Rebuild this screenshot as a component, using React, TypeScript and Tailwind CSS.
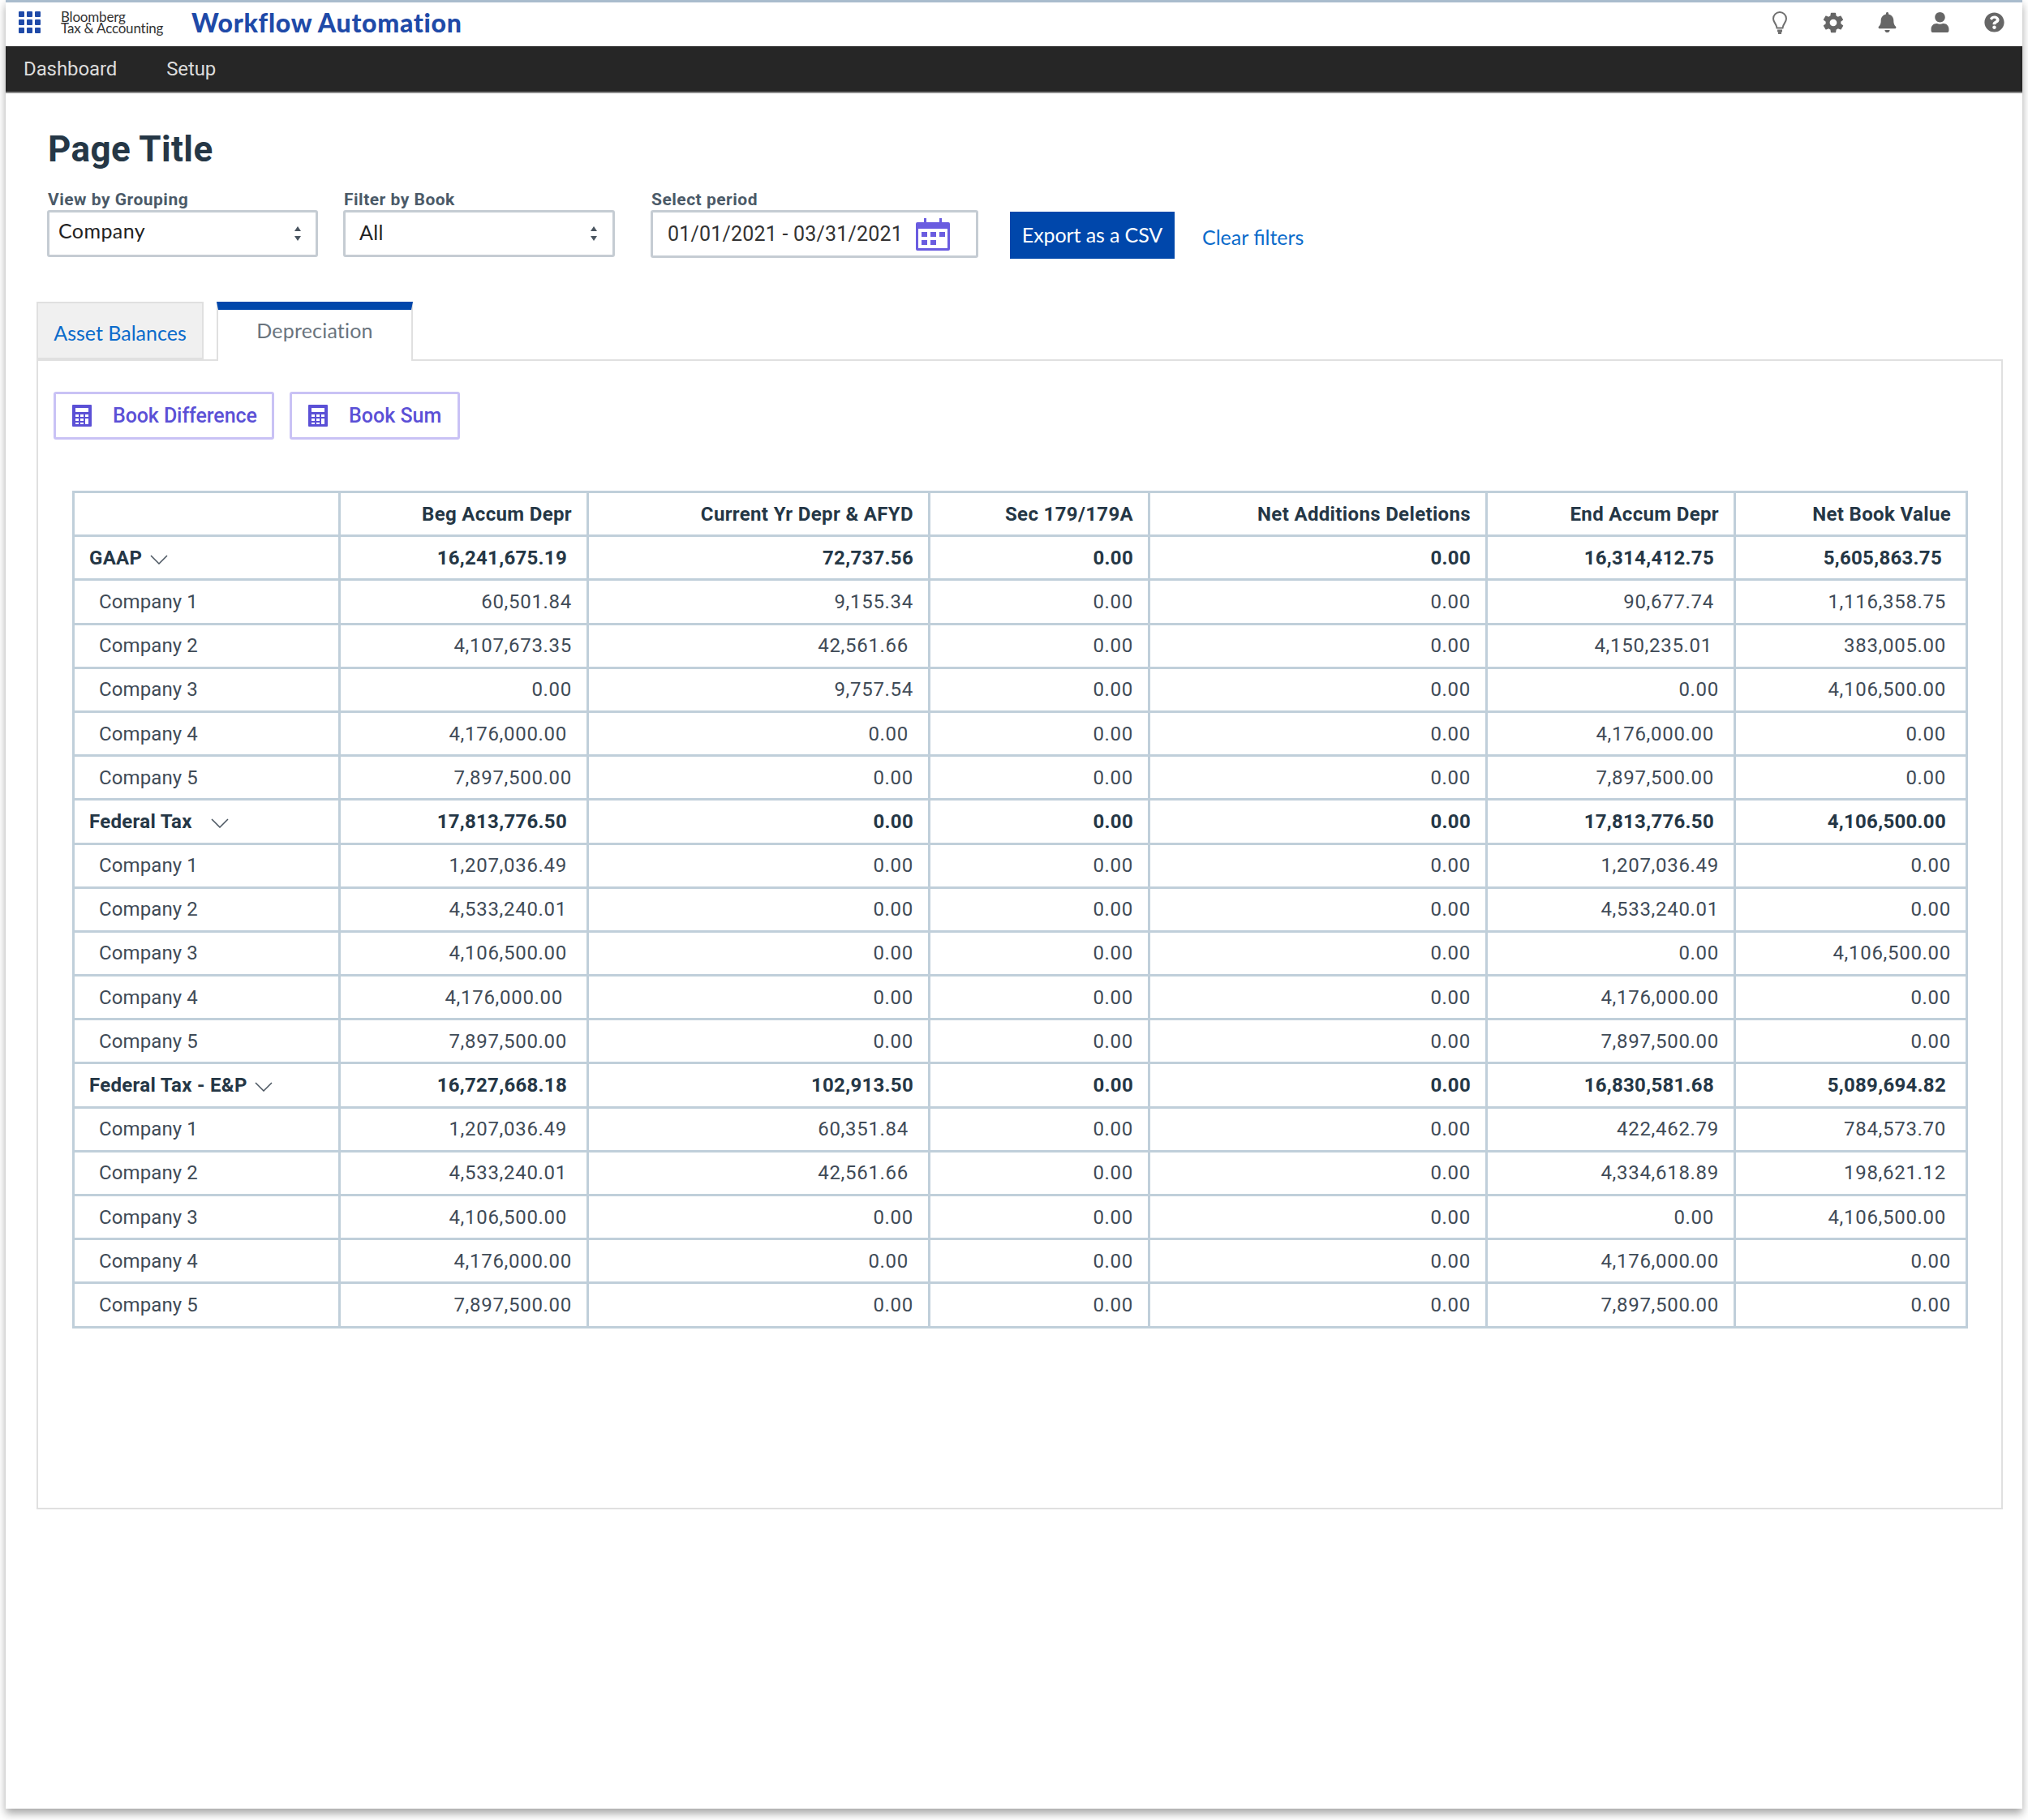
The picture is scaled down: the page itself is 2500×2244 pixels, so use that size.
import { FaBell, FaQuestionCircle, FaUser } from 'react-icons/fa';
import { IoMdSettings } from 'react-icons/io';

type Row = { name: string; group?: boolean; cells: string[] };

// a cell may end in "|n": n extra pixels of right padding, the source table is not quite aligned
const rows: Row[] = [
  { name: 'GAAP', group: true, cells: ['16,241,675.19|6', '72,737.56', '0.00', '0.00', '16,314,412.75|6', '5,605,863.75|11'] },
  { name: 'Company 1', cells: ['60,501.84', '9,155.34', '0.00', '0.00', '90,677.74|6', '1,116,358.75|6'] },
  { name: 'Company 2', cells: ['4,107,673.35', '42,561.66|6', '0.00', '0.00', '4,150,235.01|8', '383,005.00|6'] },
  { name: 'Company 3', cells: ['0.00', '9,757.54', '0.00', '0.00', '0.00', '4,106,500.00|6'] },
  { name: 'Company 4', cells: ['4,176,000.00|6', '0.00|6', '0.00', '0.00', '4,176,000.00|6', '0.00|6'] },
  { name: 'Company 5', cells: ['7,897,500.00', '0.00', '0.00', '0.00', '7,897,500.00|6', '0.00|6'] },
  { name: 'Federal Tax', group: true, cells: ['17,813,776.50|6', '0.00', '0.00', '0.00', '17,813,776.50|6', '4,106,500.00|6'] },
  { name: 'Company 1', cells: ['1,207,036.49|6', '0.00', '0.00', '0.00', '1,207,036.49', '0.00'] },
  { name: 'Company 2', cells: ['4,533,240.01|6', '0.00', '0.00', '0.00', '4,533,240.01', '0.00'] },
  { name: 'Company 3', cells: ['4,106,500.00|6', '0.00', '0.00', '0.00', '0.00', '4,106,500.00'] },
  { name: 'Company 4', cells: ['4,176,000.00|11', '0.00', '0.00', '0.00', '4,176,000.00', '0.00'] },
  { name: 'Company 5', cells: ['7,897,500.00|6', '0.00', '0.00', '0.00', '7,897,500.00', '0.00'] },
  { name: 'Federal Tax - E&P', group: true, cells: ['16,727,668.18|6', '102,913.50', '0.00', '0.00', '16,830,581.68|6', '5,089,694.82|6'] },
  { name: 'Company 1', cells: ['1,207,036.49|6', '60,351.84|6', '0.00', '0.00', '422,462.79', '784,573.70|6'] },
  { name: 'Company 2', cells: ['4,533,240.01|6', '42,561.66|6', '0.00', '0.00', '4,334,618.89', '198,621.12|6'] },
  { name: 'Company 3', cells: ['4,106,500.00|6', '0.00', '0.00', '0.00', '0.00|6', '4,106,500.00|6'] },
  { name: 'Company 4', cells: ['4,176,000.00', '0.00|6', '0.00', '0.00', '4,176,000.00', '0.00'] },
  { name: 'Company 5', cells: ['7,897,500.00', '0.00', '0.00', '0.00', '7,897,500.00', '0.00'] },
];

const headers = ['Beg Accum Depr', 'Current Yr Depr & AFYD', 'Sec 179/179A', 'Net Additions Deletions', 'End Accum Depr', 'Net Book Value'];
const colWidths = [328, 306, 421, 271, 416, 306, 286];

const GridIcon = () => (
  <svg width="27" height="27" viewBox="0 0 27 27" fill="#1f4aa8">
    {[0, 10, 20].map(y =>
      [0, 10, 20].map(x => <rect key={x + '-' + y} x={x} y={y} width="7" height="7" rx="1" />)
    )}
  </svg>
);

const BulbIcon = () => (
  <svg width="18" height="28" viewBox="0 0 18 28" fill="none" stroke="#707070" strokeWidth="2">
    <path d="M5.5 20.5C5 15.5 1 13.5 1 9a8 8 0 0 1 16 0c0 4.5-4 6.500-4.500 11.500z" />
    <path d="M6 24h6M7 27h4" strokeWidth="3" />
  </svg>
);

const Sorter = () => (
  <svg width="10" height="20" viewBox="0 0 10 20" fill="#4a5560">
    <path d="M5 1l4 6H1zM5 19L1 13h8z" />
  </svg>
);

const CalendarIcon = () => (
  <svg width="42" height="40" viewBox="0 0 42 40">
    <path d="M10 0h3v6h-3zM29 0h3v6h-3z" fill="#6a5ce0" />
    <rect y="5" width="42" height="35" rx="2" fill="#6a5ce0" />
    <rect x="3" y="13" width="36" height="24" fill="#fff" />
    <path d="M7 17h7v6H7zM18 17h7v6h-7zM29 17h7v6h-7zM7 27h7v6H7zM18 27h7v6h-7z" fill="#6a5ce0" />
  </svg>
);

const CalcIcon = () => (
  <svg width="24" height="27" viewBox="0 0 24 27">
    <rect width="24" height="27" rx="1" fill="#5b50d6" />
    <path d="M4 4h16v5H4z" fill="#fff" />
    <path d="M4 12h4v3H4zM10 12h4v3h-4zM16 12h4v3h-4zM4 17h4v3H4zM10 17h4v3h-4zM16 17h4v7h-4zM4 22h4v2H4zM10 22h4v2h-4z" fill="#fff" />
  </svg>
);

const Chevron = ({ className }: { className?: string }) => (
  <svg className={className} width="22" height="12" viewBox="0 0 22 12" fill="none" stroke="#4a5560" strokeWidth="1.500">
    <path d="M1 1l10 10L21 1" />
  </svg>
);

const splitCell = (cell: string): [string, number] => {
  const [text, extra] = cell.split('|');
  return [text, extra ? parseInt(extra) : 0];
};

export default function App() {
  return (
    <div className="w-[2500px] h-[2244px] bg-white font-[family-name:Roboto,sans-serif] tracking-[0.7px] text-[#3f4b57]">
      <div className="ml-[7px] w-[2486px] h-[2230px] bg-white shadow-[0_6px_10px_rgba(0,0,0,0.35)]">
        <header className="h-[57px] border-t-[3px] border-[#a9bccd] pb-[5px] flex items-center">
          <div className="ml-[16px]">
            <GridIcon />
          </div>
          <div className="ml-[25px] w-[135px] font-[family-name:Lato,sans-serif] text-[17px] leading-[14px] tracking-[-0.2px] text-[#333]">
            <div>Bloomberg</div>
            <div className="whitespace-nowrap">Tax & Accounting</div>
          </div>
          <div className="ml-[26px] font-[family-name:Lato,sans-serif] font-black text-[32px] tracking-[0.7px] text-[#1f4aa8]">
            Workflow Automation
          </div>
          <div className="ml-auto mr-[22px] flex items-center gap-[42px] text-[#666]">
            <BulbIcon />
            <IoMdSettings size={30} className="-mr-[3px]" />
            <FaBell size={25} className="-mr-[2px]" />
            <FaUser size={25} />
            <FaQuestionCircle size={25} />
          </div>
        </header>

        <nav className="h-[58px] bg-[#262626] border-b-[2px] border-[#8a8a8a] flex items-center pl-[22px] gap-[61px] text-[24px] tracking-[-0.1px] text-[#dcdcdc]">
          <span>Dashboard</span>
          <span>Setup</span>
        </nav>

        <main className="pt-[43px]">
          <h1 className="pl-[52px] h-[52px] text-[44px] leading-[52px] font-bold tracking-[0.4px] text-[#253746]">Page Title</h1>

          <div className="mt-[24px] pl-[51px] flex items-start">
            <div className="w-[334px]">
              <div className="h-[24px] pl-[1px] text-[21px] leading-[24px] font-bold tracking-[0.5px] text-[#4b5a68]">View by Grouping</div>
              <div className="mt-[1px] h-[58px] border-[3px] border-[#c5ccd3] rounded-[3px] flex items-center justify-between pl-[11px] pr-[17px] font-[family-name:Lato,sans-serif] text-[25px] tracking-[0.4px] text-[#222] bg-white">
                <span className="-mt-[7px]">Company</span>
                <Sorter />
              </div>
            </div>
            <div className="w-[335px] ml-[31px]">
              <div className="h-[24px] pl-[1px] text-[21px] leading-[24px] font-bold tracking-[0.5px] text-[#4b5a68]">Filter by Book</div>
              <div className="mt-[1px] h-[58px] border-[3px] border-[#c5ccd3] rounded-[3px] flex items-center justify-between pl-[17px] pr-[18px] font-[family-name:Lato,sans-serif] text-[25px] tracking-[0.4px] text-[#222] bg-white">
                <span className="-mt-[2px]">All</span>
                <Sorter />
              </div>
            </div>
            <div className="w-[404px] ml-[44px]">
              <div className="h-[24px] pl-[1px] text-[21px] leading-[24px] font-bold tracking-[0.5px] text-[#4b5a68]">Select period</div>
              <div className="mt-[1px] h-[59px] border-[3px] border-[#c5ccd3] rounded-[3px] flex items-center pl-[18px] text-[25px] tracking-[0.2px] text-[#333] bg-white">
                <span className="w-[306px] whitespace-nowrap">01/01/2021 - 03/31/2021</span>
                <CalendarIcon />
              </div>
            </div>
            <button className="ml-[39px] mt-[27px] w-[203px] h-[58px] bg-[#0047ab] text-white font-[family-name:Lato,sans-serif] text-[25px] tracking-[-0.1px]">
              Export as a CSV
            </button>
            <a className="ml-[34px] mt-[43px] font-[family-name:Lato,sans-serif] text-[25px] leading-[30px] tracking-[0px] text-[#0b6bcb]">Clear filters</a>
          </div>

          <div className="mt-[53px] ml-[38px] w-[2424px]">
            <div className="flex items-end">
              <div className="w-[206px] h-[71px] bg-[#f0f0f0] border-2 border-[#e0e0e0] flex items-center justify-center pt-[6px] font-[family-name:Lato,sans-serif] text-[25px] tracking-[0px] text-[#0b6bcb]">
                Asset Balances
              </div>
              <div className="relative z-10 -mb-[2px] ml-[16px] w-[242px] h-[73px] bg-white border-x-2 border-[#e0e0e0] border-t-[10px] border-t-[#0047ab] flex items-center justify-center pb-[12px] font-[family-name:Lato,sans-serif] text-[25px] tracking-[0.2px] text-[#6a747e]">
                Depreciation
              </div>
            </div>

            <section className="h-[1418px] border-2 border-[#e0e0e0] pt-[38px] pl-[19px]">
              <div className="flex gap-[19px]">
                <button className="w-[272px] h-[59px] border-[3px] border-[#c9c2f5] rounded-[3px] flex items-center pl-[20px] gap-[26px] text-[25px] font-medium tracking-[-0.1px] text-[#5b50d6]">
                  <CalcIcon />
                  Book Difference
                </button>
                <button className="w-[210px] h-[59px] border-[3px] border-[#c9c2f5] rounded-[3px] flex items-center pl-[20px] gap-[26px] text-[25px] font-medium tracking-[0px] text-[#5b50d6]">
                  <CalcIcon />
                  Book Sum
                </button>
              </div>

              <table className="mt-[63px] ml-[23px] w-[2334px] table-fixed border-collapse text-[24px]">
                <colgroup>
                  {colWidths.map((w, i) => (
                    <col key={i} style={{ width: w }} />
                  ))}
                </colgroup>
                <thead>
                  <tr className="h-[54.2px]">
                    <th className="border-[3px] border-[#c0cfda]"></th>
                    {headers.map(h => (
                      <th key={h} className="border-[3px] border-[#c0cfda] pr-[18px] text-right font-bold tracking-[0.35px] text-[#253746] whitespace-nowrap">
                        {h}
                      </th>
                    ))}
                  </tr>
                </thead>
                <tbody>
                  {rows.map((row, i) => (
                    <tr key={i} className={row.group ? 'h-[54.2px] font-bold tracking-[0.3px] text-[#253746]' : 'h-[54.2px]'}>
                      <td className={row.group ? 'border-[3px] border-[#c0cfda] pl-[18px] whitespace-nowrap' : 'border-[3px] border-[#c0cfda] pl-[30px] tracking-[0.1px] whitespace-nowrap'}>
                        <span className="inline-flex items-center">
                          {row.name}
                          {row.group && (
                            <Chevron className={row.name === 'Federal Tax - E&P' ? 'ml-[9px] mt-[4px]' : row.name === 'GAAP' ? 'ml-[10px] mt-[4px]' : 'ml-[23px] mt-[4px]'} />
                          )}
                        </span>
                      </td>
                      {row.cells.map((cell, j) => {
                        const [text, extra] = splitCell(cell);
                        return (
                          <td key={j} className="border-[3px] border-[#c0cfda] text-right" style={{ paddingRight: 18 + extra }}>
                            {text}
                          </td>
                        );
                      })}
                    </tr>
                  ))}
                </tbody>
              </table>
            </section>
          </div>
        </main>
      </div>
    </div>
  );
}
